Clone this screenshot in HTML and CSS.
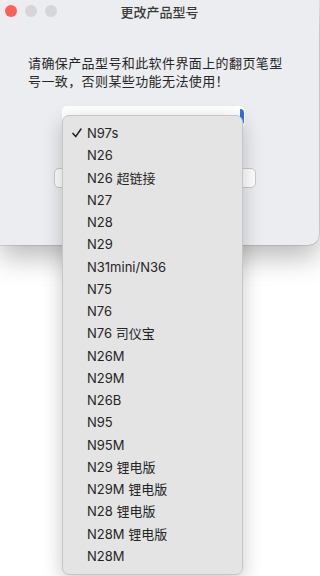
FILE: index.html
```html
<!DOCTYPE html>
<html lang="zh">
<head>
<meta charset="utf-8">
<link rel="stylesheet" href="styles.css">
</head>
<body>
<div class="window">
  <div class="titlebar">
    <div class="lights">
      <span class="light red"></span>
      <span class="light gray"></span>
      <span class="light gray"></span>
    </div>
    <div class="title">更改产品型号</div>
  </div>
  <p class="message">请确保产品型号和此软件界面上的翻页笔型号一致，否则某些功能无法使用！</p>
  <div class="select-row">
    <div class="select"><span class="select-arrow"></span></div>
  </div>
  <div class="button-row">
    <div class="button"></div>
  </div>
</div>
<div class="menu">
  <div class="item checked"><svg class="check" width="10" height="10" viewBox="0 0 10 10"><path d="M1 5.4 L3.7 8.6 L9 1" fill="none" stroke="#1f1f1f" stroke-width="1.5" stroke-linecap="round" stroke-linejoin="round"/></svg>N97s</div>
  <div class="item">N26</div>
  <div class="item">N26 超链接</div>
  <div class="item">N27</div>
  <div class="item">N28</div>
  <div class="item">N29</div>
  <div class="item">N31mini/N36</div>
  <div class="item">N75</div>
  <div class="item">N76</div>
  <div class="item">N76 司仪宝</div>
  <div class="item">N26M</div>
  <div class="item">N29M</div>
  <div class="item">N26B</div>
  <div class="item">N95</div>
  <div class="item">N95M</div>
  <div class="item">N29 锂电版</div>
  <div class="item">N29M 锂电版</div>
  <div class="item">N28 锂电版</div>
  <div class="item">N28M 锂电版</div>
  <div class="item">N28M</div>
</div>
</body>
</html>
```
FILE: styles.css
```css
html, body {
  margin: 0;
  padding: 0;
  background: #ffffff;
  width: 320px;
  height: 576px;
  overflow: hidden;
  font-family: Inter, "Noto Sans CJK SC", sans-serif;
}
.window {
  width: 319px;
  height: 245px;
  background: #ecedf0;
  border-bottom-right-radius: 10px;
  box-shadow: 0 12px 28px rgba(0,0,0,0.28), 0 0 0 0.5px rgba(0,0,0,0.2);
  display: flex;
  flex-direction: column;
  box-sizing: border-box;
}
.titlebar {
  height: 22px;
  display: flex;
  align-items: center;
  position: relative;
  margin-bottom: 2px;
}
.lights {
  display: flex;
  gap: 8px;
  padding-left: 5px;
  align-items: center;
}
.light {
  width: 12px;
  height: 12px;
  border-radius: 50%;
  display: block;
}
.light.red { background: #fe5f57; }
.light.gray { background: #d6d6d8; }
.title {
  position: absolute;
  left: 0; right: 0; top: 0;
  text-align: center;
  line-height: 24px;
  font-size: 13px;
  font-weight: 500;
  color: #3a3a3a;
  font-family: "Noto Sans CJK SC", sans-serif;
}
.message {
  margin: 30px 28px 0 28px;
  font-size: 13px;
  letter-spacing: 0.4px;
  line-height: 18px;
  color: #262626;
  font-family: "Noto Sans CJK SC", sans-serif;
}
.select-row {
  margin-top: 16px;
  padding-left: 62px;
}
.select {
  width: 183px;
  height: 22px;
  background: #ffffff;
  border-radius: 5px;
  position: relative;
}
.select-arrow {
  position: absolute;
  right: 1px; top: 3px;
  width: 4px; height: 16px;
  background: #2f6fe4;
  border-radius: 0 4px 4px 0;
}
.button-row {
  margin-top: 40px;
  padding-left: 54px;
}
.button {
  width: 202px;
  height: 20px;
  background: #ffffff;
  border: 0.5px solid #c9c9cc;
  border-radius: 5px;
  box-sizing: border-box;
}
.menu {
  position: absolute;
  left: 62px;
  top: 115px;
  width: 181px;
  height: 460px;
  box-sizing: border-box;
  background: #e4e4e4;
  border: 1px solid #c6c6c6;
  border-radius: 7px;
  box-shadow: 0 6px 20px rgba(0,0,0,0.22);
  padding-top: 6px;
}
.item {
  height: 22.26px;
  line-height: 22.26px;
  font-size: 13px;
  color: #242424;
  padding-left: 24px;
  position: relative;
  white-space: nowrap;
}
.check {
  position: absolute;
  left: 9px;
  top: 6px;
}
```
